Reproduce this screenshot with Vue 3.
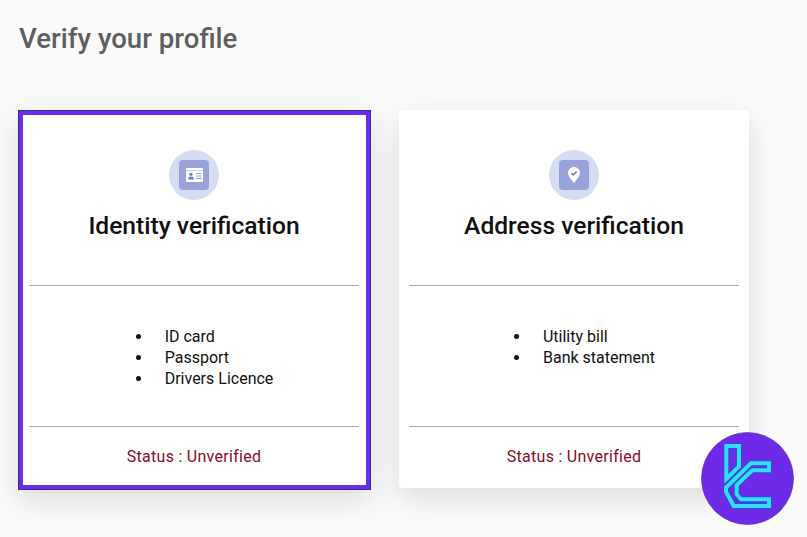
<script setup>
const cards = [
  {
    id: 'identity',
    title: 'Identity verification',
    items: ['ID card', 'Passport', 'Drivers Licence'],
    active: true,
    icon: 'id'
  },
  {
    id: 'address',
    title: 'Address verification',
    items: ['Utility bill', 'Bank statement'],
    active: false,
    icon: 'pin'
  }
]
</script>

<template>
  <div class="page">
    <h1 class="heading">Verify your profile</h1>
    <div class="cards">
      <section v-for="card in cards" :key="card.id" class="card" :class="{ active: card.active }">
        <div class="card-top">
          <div class="icon-circle">
            <div class="icon-square">
              <svg v-if="card.icon === 'id'" width="17" height="14" viewBox="0 0 17 14">
                <rect x="0" y="0" width="17" height="14" rx="1" fill="#fff" />
                <rect x="0" y="2.400" width="17" height="0.7" fill="#a9b2e0" />
                <circle cx="5" cy="6.300" r="1.600" fill="#6f7cc4" />
                <path d="M2 11.500c0-2 1.400-3 3-3s3 1 3 3z" fill="#6f7cc4" />
                <path d="M10 5.500h5.500M10 8h5.500M10 10.500h5.500" stroke="#8f9bd6" stroke-width="1" />
              </svg>
              <svg v-else width="12" height="16" viewBox="0 0 12 16">
                <path d="M6 0C9.300 0 12 2.600 12 5.800 12 9.400 8.400 12.800 6 16 3.600 12.800 0 9.400 0 5.800 0 2.600 2.700 0 6 0z" fill="#fff" />
                <path d="M3.400 6l1.900 1.900 3.300-3.300" fill="none" stroke="#6f7cc4" stroke-width="1.500" />
              </svg>
            </div>
          </div>
          <h2 class="card-title">{{ card.title }}</h2>
        </div>
        <hr class="rule" />
        <div class="card-body">
          <ul class="doc-list">
            <li v-for="item in card.items" :key="item">{{ item }}</li>
          </ul>
        </div>
        <hr class="rule" />
        <div class="status">Status : Unverified</div>
      </section>
    </div>

    <svg class="brand" viewBox="42 37 279 279" width="93" height="93">
      <circle cx="181.500" cy="176.500" r="138" fill="#6d2ae8" stroke="#5a34b0" stroke-width="2" />
      <g fill="none" stroke-linejoin="miter">
        <g stroke="#2a4fd0" stroke-width="18">
          <path d="M118 79H156V140L118 178Z" />
          <path d="M246 131H192L117 204V216L140 259H246V239H162L149 224V196L196 152H246Z" />
        </g>
        <g stroke="#35dcff" stroke-width="12">
          <path d="M118 79H156V140L118 178Z" />
          <path d="M246 131H192L117 204V216L140 259H246V239H162L149 224V196L196 152H246Z" />
        </g>
      </g>
    </svg>
  </div>
</template>

<style>
html,
body {
  margin: 0;
  background: #fafafa;
}
</style>

<style scoped>
.page {
  position: relative;
  width: 807px;
  height: 537px;
  overflow: hidden;
  box-sizing: border-box;
  padding: 22px 18px 0;
  background: #fafafa;
  font-family: Roboto, "Liberation Sans", sans-serif;
}

.heading {
  margin: 0 0 0 1px;
  font-size: 27.6px;
  line-height: 34px;
  font-weight: 500;
  color: #5f5f5f;
}

.cards {
  display: flex;
  align-items: flex-start;
  gap: 28px;
  margin-top: 54px;
}

.card {
  box-sizing: border-box;
  width: 350px;
  height: 378px;
  padding: 0 10px;
  background: #fff;
  border-radius: 4px;
  box-shadow: 0 10px 30px rgba(0, 0, 0, 0.12);
  display: flex;
  flex-direction: column;
}

.card.active {
  width: 353px;
  height: 380px;
  padding: 0 7px 0 6px;
  border: 5px solid #6b2cf0;
  outline: 1px solid #3b2a8e;
  outline-offset: -1px;
  border-radius: 0;
}

.card-top {
  height: 175px;
  display: flex;
  flex-direction: column;
  align-items: center;
  flex: none;
}

.active .card-top {
  height: 170px;
}

.icon-circle {
  width: 50px;
  height: 50px;
  margin-top: 40px;
  border-radius: 50%;
  background: #d5ddf2;
  display: flex;
  align-items: center;
  justify-content: center;
}

.active .icon-circle {
  margin-top: 35px;
}

.icon-square {
  width: 30px;
  height: 30px;
  border-radius: 4px;
  background: #98a3da;
  display: flex;
  align-items: center;
  justify-content: center;
}

.card-title {
  margin: 11px 0 0;
  font-size: 24.6px;
  line-height: 30px;
  font-weight: 500;
  color: #111;
}

.rule {
  flex: none;
  width: 100%;
  margin: 0;
  border: 0;
  border-top: 1px solid #aaa;
}

.card-body {
  flex: none;
  height: 140px;
  display: flex;
  justify-content: center;
  padding-top: 40px;
  box-sizing: border-box;
}

.doc-list {
  margin: 0;
  padding-left: 50px;
  list-style: none;
  font-size: 16px;
  line-height: 21px;
  color: #111;
}

.doc-list li {
  position: relative;
}

.doc-list li::before {
  content: "";
  position: absolute;
  left: -29px;
  top: 8px;
  width: 5px;
  height: 5px;
  border-radius: 50%;
  background: #111;
}

.status {
  flex: none;
  padding-top: 20px;
  text-align: center;
  font-size: 16px;
  line-height: 20px;
  letter-spacing: 0.28px;
  color: #8b0d24;
}

.brand {
  position: absolute;
  left: 701px;
  top: 432px;
}
</style>
